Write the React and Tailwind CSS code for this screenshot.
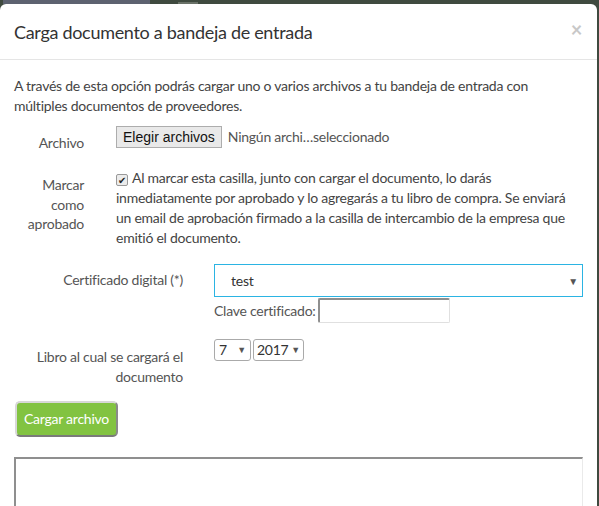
export default function App() {
  return (
    <div className="h-[506px] w-[599px] overflow-hidden bg-[#3f4a3f] font-['Lato',sans-serif] text-[14px] tracking-[-0.25px] text-[#444]">
      {/* backdrop top strip */}
      <div className="flex h-[4px] items-end overflow-hidden">
        <div className="ml-[3px] h-[4px] w-[147px] bg-[#5d6270]" />
        <div className="ml-[28px] h-[2px] w-[20px] bg-[#6a7268]" />
      </div>

      {/* Modal */}
      <div className="h-[520px] w-[597px] rounded-[6px] bg-white">
        {/* Header */}
        <div className="flex h-[56px] items-center justify-between border-b border-[#e5e5e5] pl-[14px] pr-[15px] pt-[1px]">
          <h4 className="text-[18px] tracking-[-0.3px] text-[#333]">Carga documento a bandeja de entrada</h4>
          <span className="-translate-y-[3px] text-[20px] font-bold leading-none text-[#c8c8c8]">×</span>
        </div>

        {/* Body */}
        <div className="px-[14px] pt-[16px] leading-[20px]">
          <p className="whitespace-nowrap">
            A través de esta opción podrás cargar uno o varios archivos a tu bandeja de entrada con
            <br />
            múltiples documentos de proveedores.
          </p>

          {/* Archivo */}
          <div className="mt-[10px] flex items-start">
            <label className="mt-[7px] w-[70px] text-right text-[#555]">Archivo</label>
            <div className="ml-[32px] flex items-center">
              <span className="flex h-[22px] items-center border border-[#adadad] bg-[#e9e9e9] px-[6px] font-['Liberation_Sans',sans-serif] text-[14px] tracking-normal text-[#111]">
                Elegir archivos
              </span>
              <span className="ml-[6px] text-[#555]">Ningún archi…seleccionado</span>
            </div>
          </div>

          {/* Marcar como aprobado */}
          <div className="mt-[15px] flex">
            <label className="mt-[7px] w-[70px] text-right leading-[19.5px] text-[#555]">
              Marcar
              <br />
              como
              <br />
              aprobado
            </label>
            <p className="ml-[32px] whitespace-nowrap">
              <span className="mr-[4px] inline-flex h-[12px] w-[12px] translate-y-[1px] items-center justify-center rounded-[2px] border border-[#999] bg-[#ececec] text-[10px] leading-none tracking-normal text-[#222]">
                ✔
              </span>
              Al marcar esta casilla, junto con cargar el documento, lo darás
              <br />
              inmediatamente por aprobado y lo agregarás a tu libro de compra. Se enviará
              <br />
              un email de aprobación firmado a la casilla de intercambio de la empresa que
              <br />
              emitió el documento.
            </p>
          </div>

          {/* Certificado digital */}
          <div className="mt-[16px] flex">
            <label className="mt-[6px] w-[169px] text-right text-[#555]">Certificado digital (*)</label>
            <div className="ml-[31px] flex flex-col">
              <div className="flex h-[33px] w-[369px] items-center justify-between border border-[#2bb4e3] pl-[16px] pr-[4px]">
                <span className="text-[#333]">test</span>
                <span className="text-[10px] text-[#555]">▼</span>
              </div>
              <div className="mt-[1px] flex items-center">
                <span className="text-[#555]">Clave certificado:</span>
                <span className="ml-[2px] h-[25px] w-[132px] rounded-[2px] border border-l-2 border-t-2 border-[#e0e0e0] border-l-[#8f8f8f] border-t-[#8f8f8f]" />
              </div>
            </div>
          </div>

          {/* Libro */}
          <div className="mt-[16px] flex">
            <label className="mt-[8px] w-[169px] text-right text-[#555]">
              Libro al cual se cargará el
              <br />
              documento
            </label>
            <div className="ml-[31px] flex h-[22px] gap-[2px]">
              <div className="flex w-[37px] items-center justify-between rounded-[3px] border border-[#aaa] px-[4px]">
                <span className="text-[#333]">7</span>
                <span className="text-[9px] text-[#555]">▼</span>
              </div>
              <div className="flex w-[51px] items-center justify-between rounded-[3px] border border-[#aaa] px-[3px]">
                <span className="text-[#333]">2017</span>
                <span className="text-[9px] text-[#555]">▼</span>
              </div>
            </div>
          </div>

          {/* Botón */}
          <button className="mt-[14px] ml-[1px] flex h-[36px] items-center rounded-[5px] border-2 border-[#d8d8d8] border-b-[#7a7a7a] border-r-[#8a8a8a] bg-[#82c341] px-[7px] text-[14px] text-white">
            Cargar archivo
          </button>

          {/* Resultado */}
          <div className="mt-[20px] h-[60px] w-[569px] border border-l-2 border-t-2 border-[#eaeaea] border-l-[#8f8f8f] border-t-[#8f8f8f]" />
        </div>
      </div>
    </div>
  );
}
